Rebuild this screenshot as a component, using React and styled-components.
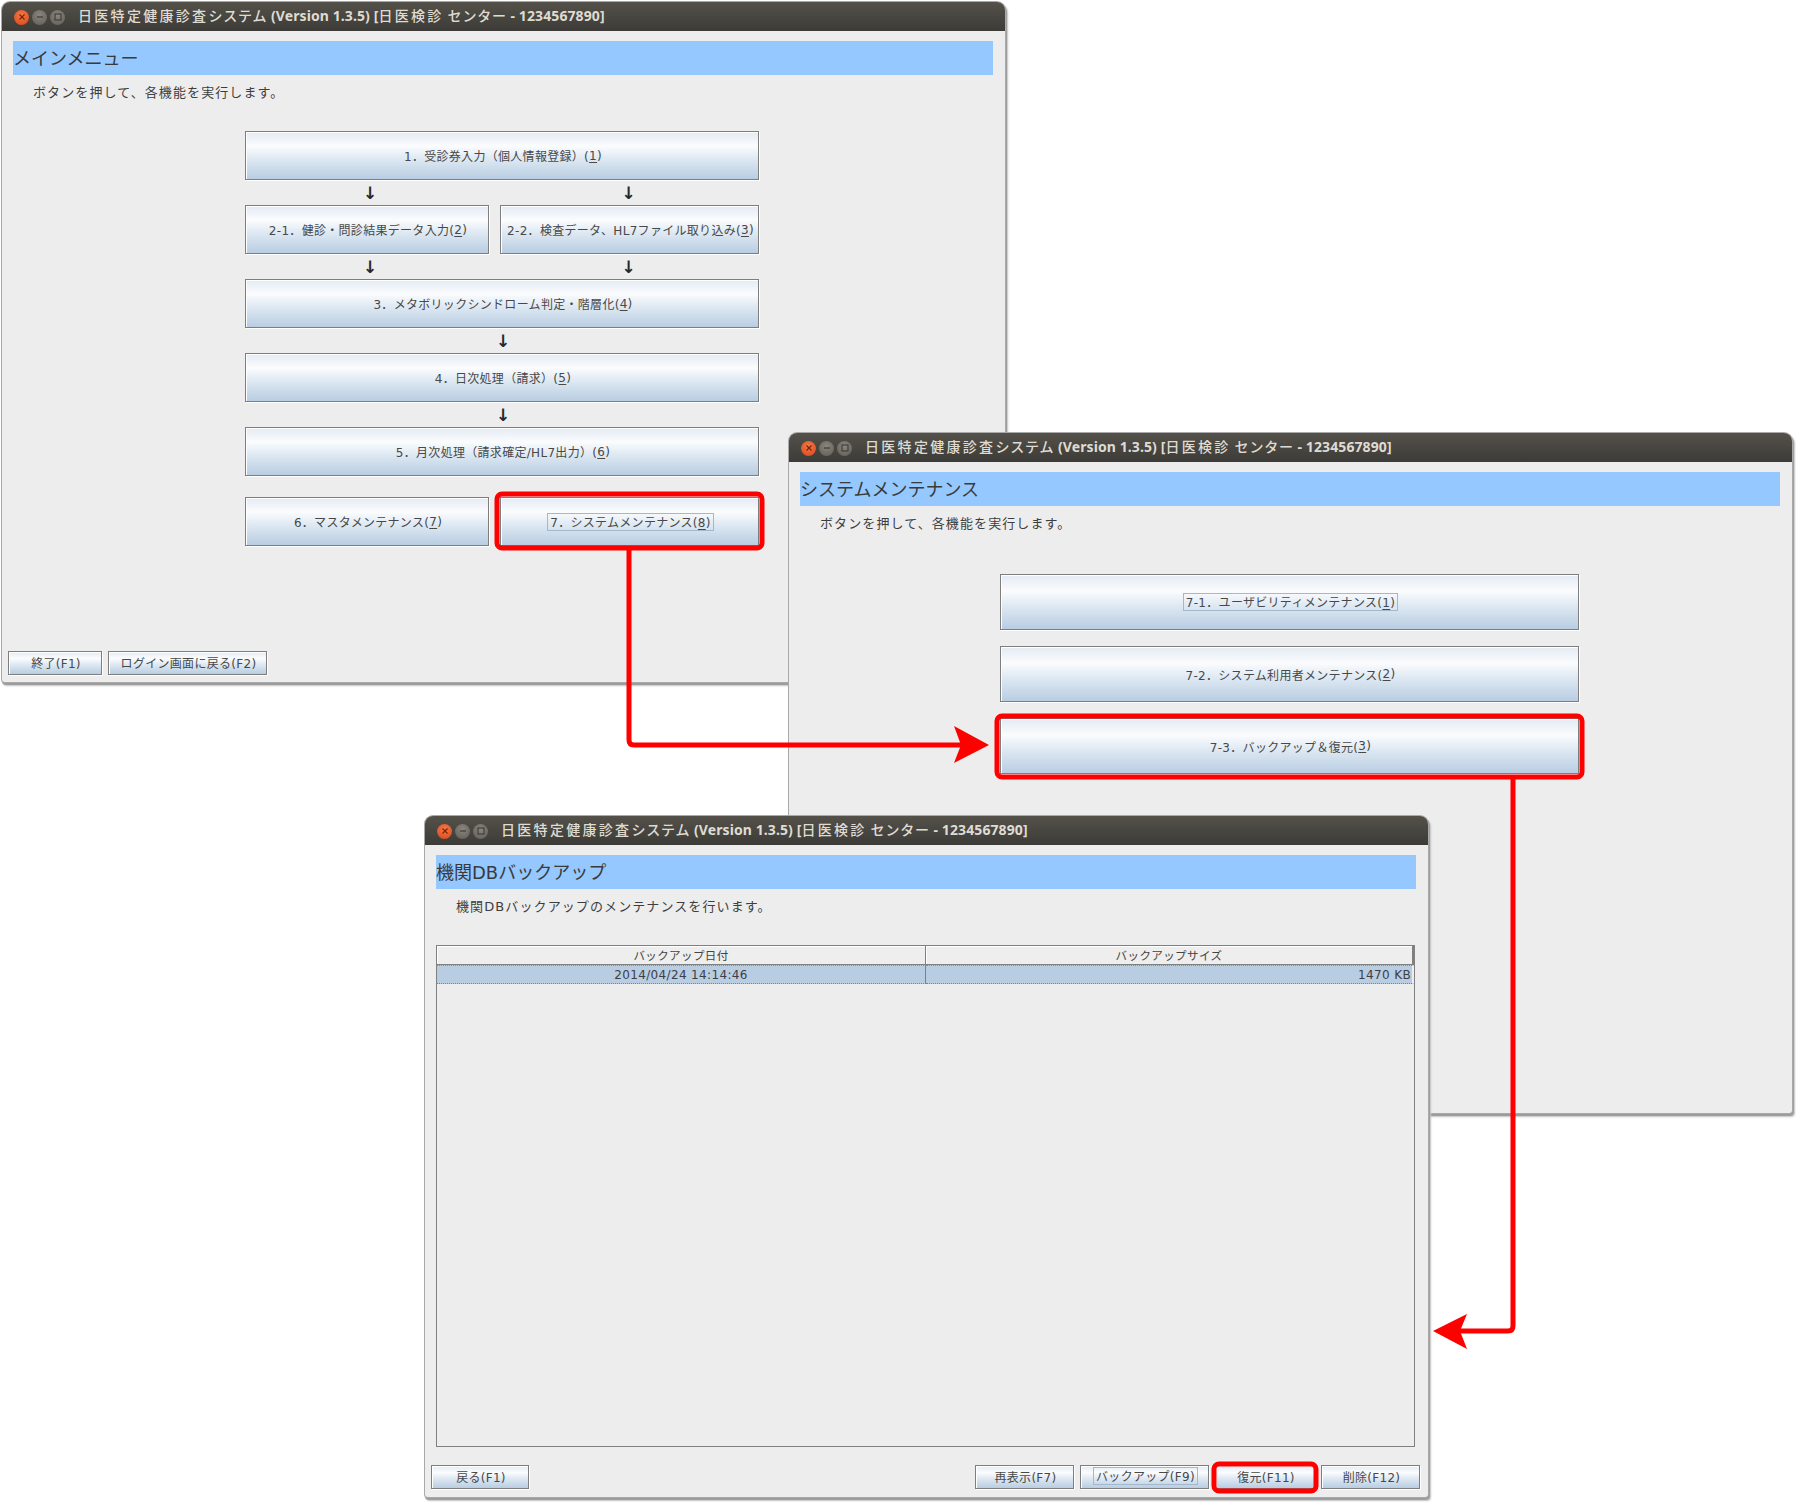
import React from "react";
import styled, { createGlobalStyle } from "styled-components";

const GlobalStyle = createGlobalStyle`
  html, body {
    margin: 0;
    padding: 0;
    background: #fff;
  }
  body {
    font-family: "DejaVu Sans", "Noto Sans CJK JP", sans-serif;
    color: #333;
  }
`;

const Desktop = styled.div`
  position: relative;
  width: 1796px;
  height: 1502px;
  overflow: hidden;
  background: #fff;
`;

const Frame = styled.section`
  position: absolute;
  left: ${(p) => p.$x}px;
  top: ${(p) => p.$y}px;
  width: ${(p) => p.$w}px;
  height: ${(p) => p.$h}px;
  display: flex;
  flex-direction: column;
  background: #ededed;
  border-radius: 8px 8px 3px 3px;
  box-shadow: 0 0 0 1px #a9a9a9, 1px 2px 1px 1px #9b9b9b, 2px 3px 2px 1px #c8c8c8;
`;

const TitleBar = styled.header`
  height: 29px;
  flex: none;
  display: flex;
  align-items: center;
  padding-left: 12px;
  border-radius: 8px 8px 0 0;
  background: linear-gradient(#54514a, #3c3b37);
`;

const WinButtons = styled.div`
  display: flex;
  gap: 3px;
  margin-right: 13px;
  margin-top: 1px;
`;

const WinButton = styled.span`
  width: 15px;
  height: 15px;
  border-radius: 50%;
  display: flex;
  align-items: center;
  justify-content: center;
  background: ${(p) =>
    p.$close
      ? "radial-gradient(circle at 50% 35%, #f47a46, #d9441a)"
      : "radial-gradient(circle at 50% 35%, #8a867e, #5f5c55)"};
  svg {
    display: block;
  }
`;

const TitleText = styled.h1`
  margin: -3px 0 0;
  font-family: "Noto Sans", "Noto Sans CJK JP", sans-serif;
  font-size: 14px;
  line-height: 20px;
  font-weight: 700;
  letter-spacing: 0.1px;
  color: #dfdbd2;
  white-space: pre;
`;

const Wide = styled.span`
  font-family: "Noto Sans CJK JP", sans-serif;
  font-weight: 500;
  letter-spacing: 2.3px;
`;

const Kana = styled.span`
  font-family: "Noto Sans CJK JP", sans-serif;
  font-weight: 500;
  letter-spacing: ${(p) => p.$sp || 0}px;
`;

const Body = styled.div`
  flex: 1;
  min-height: 0;
  display: flex;
  flex-direction: column;
  padding: 10px 12px ${(p) => p.$bottom || 7}px 11px;
`;

const Banner = styled.h2`
  margin: 0;
  height: 34px;
  flex: none;
  display: flex;
  align-items: center;
  padding-bottom: 3px;
  box-sizing: border-box;
  background: #94c8ff;
  font-size: 18px;
  font-weight: 400;
  color: #3a3a3a;
  white-space: pre;
`;

const Lead = styled.p`
  margin: 10px 0 0;
  padding-left: 20px;
  height: 16px;
  line-height: 16px;
  flex: none;
  font-size: 13px;
  letter-spacing: 1.1px;
  color: #3e3e3e;
`;

const Menu = styled.div`
  margin: 30px 0 0 232px;
  width: 514px;
  display: grid;
  grid-template-columns: 244px 259px;
  column-gap: 11px;
`;

const SubMenu = styled.div`
  margin: 42px 0 0 200px;
  width: 579px;
  display: flex;
  flex-direction: column;
  gap: 16px;
`;

const Btn = styled.button`
  display: flex;
  align-items: center;
  justify-content: center;
  box-sizing: border-box;
  padding: 0 0 ${(p) => (p.$h === 24 ? 2 : 0)}px 2px;
  margin: 0;
  height: ${(p) => p.$h || 49}px;
  width: ${(p) => (p.$w ? `${p.$w}px` : "auto")};
  grid-column: ${(p) => (p.$full ? "1 / -1" : "auto")};
  border: 1px solid #7e7e7e;
  box-shadow: inset 1px 1px 0 #fff, 1px 1px 0 #fff;
  background: linear-gradient(#e3ebf3 0%, #fbfcfe 30%, #dde8f2 58%, #b9cde2 100%);
  font-family: "DejaVu Sans", "Noto Sans CJK JP", sans-serif;
  font-size: 12px;
  letter-spacing: 0.3px;
  color: #484848;
  white-space: pre;
`;

const Focus = styled.span`
  padding: 2px 2px 0;
  border: 1px solid #a3b8cc;
  line-height: 14px;
`;

const Key = styled.span`
  text-decoration: underline;
  text-underline-offset: 2px;
`;

const ArrowCell = styled.div`
  height: 25px;
  display: flex;
  align-items: center;
  justify-content: center;
  grid-column: ${(p) => (p.$full ? "1 / -1" : "auto")};
  padding-left: ${(p) => p.$shift || 0}px;
  padding-right: ${(p) => p.$back || 0}px;
  font-family: "DejaVu Sans", sans-serif;
  font-size: 17px;
  font-weight: 700;
  color: #27272f;
`;

const Spacer = styled.div`
  height: ${(p) => p.$h}px;
  grid-column: 1 / -1;
`;

const Footer = styled.footer`
  margin: auto -4px 0 -5px;
  display: flex;
  gap: 6px;
  flex: none;
`;

const FooterGap = styled.div`
  margin-left: auto;
`;

const BackupTable = styled.div`
  margin: 30px 1px 0 0;
  height: 502px;
  flex: none;
  box-sizing: border-box;
  border: 1px solid #808080;
  display: grid;
  grid-template-columns: 489px 1fr;
  grid-template-rows: 19px 19px 1fr;
`;

const HeadCell = styled.div`
  box-sizing: border-box;
  display: flex;
  align-items: center;
  justify-content: center;
  font-size: 11.5px;
  letter-spacing: 0.4px;
  color: #444;
  background: #eee;
  box-shadow: inset 1px 1px 0 #fff;
  border-right: ${(p) => (p.$last ? "2px" : "1px")} solid #808080;
  border-bottom: 1px solid #808080;
`;

const DataCell = styled.div`
  box-sizing: border-box;
  display: flex;
  align-items: center;
  justify-content: ${(p) => (p.$right ? "flex-end" : "center")};
  padding-right: ${(p) => (p.$right ? 1 : 0)}px;
  font-size: 12px;
  letter-spacing: 0.35px;
  color: #3e3e46;
  background: #b8cde2;
  border-top: 1px dotted #8c8c98;
  border-bottom: 1px dotted #80808c;
  border-right: ${(p) => (p.$right ? "2px solid #eee" : "1px solid #808080")};
`;

const Annotations = styled.svg`
  position: absolute;
  left: 0;
  top: 0;
  pointer-events: none;
`;

const Traffic = () => (
  <WinButtons>
    <WinButton $close>
      <svg width="8" height="8" viewBox="0 0 8 8">
        <path d="M1.5 1.5l5 5M6.5 1.5l-5 5" stroke="#7a2208" strokeWidth="1.2" />
      </svg>
    </WinButton>
    <WinButton>
      <svg width="8" height="8" viewBox="0 0 8 8">
        <path d="M1 4h6" stroke="#3c3b37" strokeWidth="1.2" />
      </svg>
    </WinButton>
    <WinButton>
      <svg width="8" height="8" viewBox="0 0 8 8">
        <rect x="1" y="1" width="6" height="6" fill="none" stroke="#3c3b37" strokeWidth="1.1" />
      </svg>
    </WinButton>
  </WinButtons>
);

const Window = ({ x, y, w, h, bottom, children }) => (
  <Frame $x={x} $y={y} $w={w} $h={h}>
    <TitleBar>
      <Traffic />
      <TitleText>
        <Wide>日医特定健康診査</Wide>
        <Kana $sp={0.8}>システム</Kana> (Version 1.3.5) [<Wide>日医検診</Wide>
        <Kana $sp={0.8}> センター</Kana> - 1234567890]
      </TitleText>
    </TitleBar>
    <Body $bottom={bottom}>{children}</Body>
  </Frame>
);

// label + mnemonic, e.g. "1．受診券入力" + "1" -> 1．受診券入力(1)
const Label = ({ text, k }) => (
  <>
    {text}(<Key>{k}</Key>)
  </>
);

const Down = (props) => <ArrowCell {...props}>↓</ArrowCell>;

export default function App() {
  return (
    <Desktop>
      <GlobalStyle />

      <Window x={2} y={2} w={1003} h={680}>
        <Banner>メインメニュー</Banner>
        <Lead>ボタンを押して、各機能を実行します。</Lead>
        <Menu>
          <Btn $full>
            <Label text="1．受診券入力（個人情報登録）" k="1" />
          </Btn>
          <Down $shift={6} />
          <Down $back={2} />
          <Btn>
            <Label text="2-1．健診・問診結果データ入力" k="2" />
          </Btn>
          <Btn>
            <Label text="2-2．検査データ、HL7ファイル取り込み" k="3" />
          </Btn>
          <Down $shift={6} />
          <Down $back={2} />
          <Btn $full>
            <Label text="3．メタボリックシンドローム判定・階層化" k="4" />
          </Btn>
          <Down $full $shift={2} />
          <Btn $full>
            <Label text="4．日次処理（請求）" k="5" />
          </Btn>
          <Down $full $shift={2} />
          <Btn $full>
            <Label text="5．月次処理（請求確定/HL7出力）" k="6" />
          </Btn>
          <Spacer $h={21} />
          <Btn>
            <Label text="6．マスタメンテナンス" k="7" />
          </Btn>
          <Btn>
            <Focus>
              <Label text="7．システムメンテナンス" k="8" />
            </Focus>
          </Btn>
        </Menu>
        <Footer>
          <Btn $h={24} $w={94}>終了(F1)</Btn>
          <Btn $h={24} $w={159}>ログイン画面に戻る(F2)</Btn>
        </Footer>
      </Window>

      <Window x={789} y={433} w={1003} h={680}>
        <Banner>システムメンテナンス</Banner>
        <Lead>ボタンを押して、各機能を実行します。</Lead>
        <SubMenu>
          <Btn $h={56}>
            <Focus>
              <Label text="7-1．ユーザビリティメンテナンス" k="1" />
            </Focus>
          </Btn>
          <Btn $h={56}>
            <Label text="7-2．システム利用者メンテナンス" k="2" />
          </Btn>
          <Btn $h={56}>
            <Label text="7-3．バックアップ＆復元" k="3" />
          </Btn>
        </SubMenu>
      </Window>

      <Window x={425} y={816} w={1003} h={681} bottom={8}>
        <Banner>機関DBバックアップ</Banner>
        <Lead>機関DBバックアップのメンテナンスを行います。</Lead>
        <BackupTable>
          <HeadCell>バックアップ日付</HeadCell>
          <HeadCell $last>バックアップサイズ</HeadCell>
          <DataCell>2014/04/24 14:14:46</DataCell>
          <DataCell $right>1470 KB</DataCell>
        </BackupTable>
        <Footer>
          <Btn $h={24} $w={98}>戻る(F1)</Btn>
          <FooterGap />
          <Btn $h={24} $w={99}>再表示(F7)</Btn>
          <Btn $h={24} $w={129}>
            <Focus>バックアップ(F9)</Focus>
          </Btn>
          <Btn $h={24} $w={100}>復元(F11)</Btn>
          <Btn $h={24} $w={99}>削除(F12)</Btn>
        </Footer>
      </Window>

      <Annotations width="1796" height="1502" viewBox="0 0 1796 1502" fill="none">
        <g stroke="#fe0000" strokeWidth="5" strokeLinejoin="round">
          <rect x="497" y="494" width="265" height="54" rx="5" />
          <rect x="997" y="716" width="585" height="61" rx="5" />
          <rect x="1214" y="1464" width="102" height="27" rx="5" />
          <path d="M629 550V740q0 5 5 5H965" />
          <path d="M1513 778V1326q0 5 -5 5H1455" />
        </g>
        <path d="M989 745L954 726L961 745L954 763Z" fill="#fe0000" />
        <path d="M1433 1331L1467 1314L1460 1331L1467 1349Z" fill="#fe0000" />
      </Annotations>
    </Desktop>
  );
}
